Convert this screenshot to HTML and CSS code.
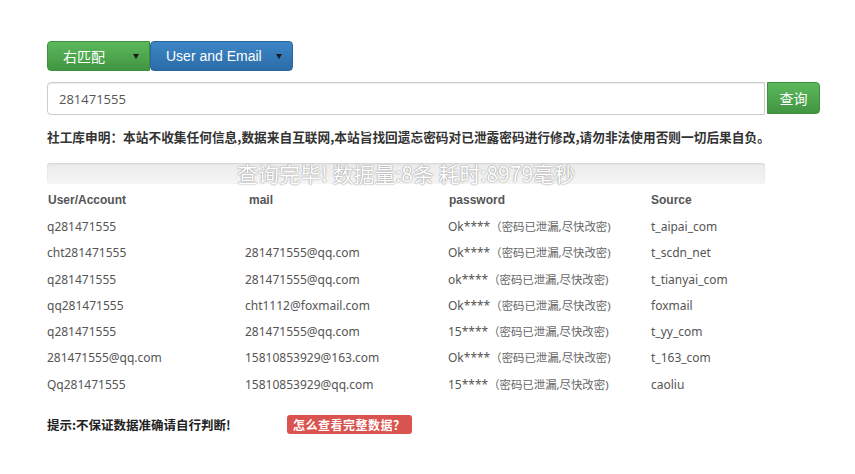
FILE: index.html
```html
<!DOCTYPE html>
<html lang="zh-CN">
<head>
    <meta charset="UTF-8">
    <meta name="viewport" content="width=device-width, initial-scale=1.0">
    <title>社工库查询</title>
    <link rel="stylesheet" href="styles.css">
</head>
<body>
    <div class="container">
        <div class="btn-row">
            <div class="drop green">右匹配<span class="caret"></span></div>
            <div class="drop blue">User and Email<span class="caret"></span></div>
        </div>

        <div class="search-row">
            <input type="text" class="query" value="281471555">
            <button class="go">查询</button>
        </div>

        <p class="notice">社工库申明：本站不收集任何信息,数据来自互联网,本站旨找回遗忘密码对已泄露密码进行修改,请勿非法使用否则一切后果自负。</p>

        <div class="progress">查询完毕! 数据量:8条 耗时:8979毫秒</div>

        <table class="results">
            <thead>
                <tr><th class="c1">User/Account</th><th class="c2">mail</th><th class="c3">password</th><th class="c4">Source</th></tr>
            </thead>
            <tbody>
                <tr><td>q281471555</td><td></td><td>Ok****<span class="warn">（密码已泄漏,尽快改密)</span></td><td>t_aipai_com</td></tr>
                <tr><td>cht281471555</td><td>281471555@qq.com</td><td>Ok****<span class="warn">（密码已泄漏,尽快改密)</span></td><td>t_scdn_net</td></tr>
                <tr><td>q281471555</td><td>281471555@qq.com</td><td>ok****<span class="warn">（密码已泄漏,尽快改密)</span></td><td>t_tianyai_com</td></tr>
                <tr><td>qq281471555</td><td>cht1112@foxmail.com</td><td>Ok****<span class="warn">（密码已泄漏,尽快改密)</span></td><td>foxmail</td></tr>
                <tr><td>q281471555</td><td>281471555@qq.com</td><td>15****<span class="warn">（密码已泄漏,尽快改密)</span></td><td>t_yy_com</td></tr>
                <tr><td>281471555@qq.com</td><td>15810853929@163.com</td><td>Ok****<span class="warn">（密码已泄漏,尽快改密)</span></td><td>t_163_com</td></tr>
                <tr><td>Qq281471555</td><td>15810853929@qq.com</td><td>15****<span class="warn">（密码已泄漏,尽快改密)</span></td><td>caoliu</td></tr>
            </tbody>
        </table>

        <div class="foot">
            <span class="tip">提示:不保证数据准确请自行判断!</span>
            <span class="label-red">怎么查看完整数据？</span>
        </div>
    </div>
</body>
</html>
```

FILE: styles.css
```css
body { margin: 0; background: #fff; font-family: "Noto Sans", "Noto Sans CJK SC", sans-serif; color: #555; }
.container { width: 773px; padding: 41px 0 0 47px; }

/* dropdown buttons */
.btn-row { display: flex; height: 30px; }
.drop { display: flex; align-items: center; height: 30px; box-sizing: border-box; padding: 0 10px 0 15px; font-family: "Liberation Sans", "Noto Sans CJK SC", sans-serif; font-size: 14px; color: #fff; border-radius: 4px; }
.drop .caret { width: 0; height: 0; margin-left: auto; border-left: 3px solid transparent; border-right: 3px solid transparent; border-top: 5px solid #1a1a1a; }
.green { width: 103px; background: linear-gradient(#5cb85c, #419641); border: 1px solid #3e8f3e; border-radius: 4px 0 0 4px; }
.blue { width: 143px; background: linear-gradient(#3d86c6, #2b6ca8); border: 1px solid #2b669a; }

.search-row { display: flex; margin-top: 11px; }
.query { width: 718px; height: 33px; box-sizing: border-box; padding: 0 11px; border: 1px solid #ccc; border-radius: 4px 0 0 4px; font-family: "Open Sans", sans-serif; font-size: 13px; color: #555; box-shadow: inset 0 1px 1px rgba(0,0,0,.075); }
.go { width: 53px; height: 32px; margin-left: 2px; border: 1px solid #3e8f3e; border-radius: 0 4px 4px 0; background: linear-gradient(#5cb85c, #419641); color: #fff; font-family: "Noto Sans CJK SC", sans-serif; font-size: 14px; padding: 0; }

.notice { margin: 14px 0 0; font-family: "Noto Sans CJK SC", sans-serif; font-size: 12.7px; font-weight: bold; color: #333; line-height: 16px; white-space: nowrap; }

.progress { width: 718px; height: 21px; margin-top: 18px; background: linear-gradient(#ebebeb, #f5f5f5); border-radius: 3px; box-shadow: inset 0 1px 2px rgba(0,0,0,.1); text-align: center; font-family: "Noto Sans CJK SC", sans-serif; font-size: 21px; line-height: 21px; color: #fff; text-shadow: 0 0 1px #888, 0 0 2px #aaa; white-space: nowrap; }

.results { border-collapse: collapse; margin-top: 3px; }
.results th, .results td { height: 26.3px; padding: 0; text-align: left; vertical-align: middle; white-space: nowrap; }
.results th { font-family: "Liberation Sans", sans-serif; font-size: 12px; font-weight: bold; color: #555; }
.results td { font-size: 12px; color: #555; }
.results .c1 { width: 197px; padding-left: 1px; }
.results .c2 { width: 199px; padding-left: 4px; }
.results .c3 { width: 202px; padding-left: 1px; }
.results .c4 { width: 114px; }
.warn { font-size: 11.4px; color: #666; }

.foot { display: flex; align-items: center; margin-top: 18px; }
.tip { width: 240px; font-family: "Noto Sans CJK SC", sans-serif; font-size: 12.5px; font-weight: bold; color: #222; }
.label-red { background: #d9534f; color: #fff; font-family: "Noto Sans CJK SC", sans-serif; font-size: 12px; font-weight: bold; padding: 1px 6px; border-radius: 3px; letter-spacing: 0.5px; }
```
